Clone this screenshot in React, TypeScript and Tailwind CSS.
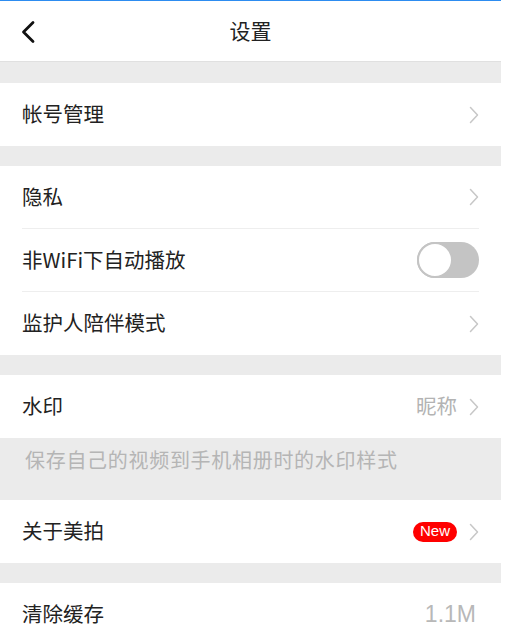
import React from "react";

const font = { fontFamily: '"Noto Sans CJK SC", "Noto Sans", sans-serif' };

const Chevron = () => (
  <svg width="10" height="18" viewBox="0 0 10 18" fill="none">
    <path d="M1.5 1.5 L8.5 9 L1.5 16.5" stroke="#c7c7c7" strokeWidth="1.5" strokeLinecap="round" strokeLinejoin="round" />
  </svg>
);

const Gap = ({ h = "h-[20px]" }: { h?: string }) => <div className={`${h} bg-[#ebebeb]`} />;

const Row = ({
  label,
  right,
  divider = false,
}: {
  label: string;
  right?: React.ReactNode;
  divider?: boolean;
}) => (
  <div className="bg-white px-[22px]">
    <div className={`flex h-[63px] items-center justify-between ${divider ? "border-b border-[#eeeeee]" : ""}`}>
      <span className="pb-[2px] text-[20.5px] leading-none text-[#222222]">{label}</span>
      <div className="flex items-center gap-[12px]">{right}</div>
    </div>
  </div>
);

export default function App() {
  return (
    <div className="min-h-[643px] w-[510px] bg-white" style={font}>
      <div className="w-[501px]">
        <div className="h-px bg-[#2d8cf0]" />
        <header className="relative flex h-[60px] items-center justify-center bg-white">
          <svg className="absolute left-[20px] top-[19px]" width="16" height="24" viewBox="0 0 16 24" fill="none">
            <path d="M13 2.5 L3.5 12 L13 21.5" stroke="#111111" strokeWidth="2.8" strokeLinecap="round" strokeLinejoin="round" />
          </svg>
          <h1 className="pb-[2px] text-[21px] leading-none text-[#222222]">设置</h1>
        </header>
        <div className="h-[22px] border-t border-[#e0e0e0] bg-[#ebebeb]" />
        <Row label="帐号管理" right={<Chevron />} />
        <Gap />
        <Row label="隐私" right={<Chevron />} divider />
        <Row
          label="非WiFi下自动播放"
          divider
          right={
            <div className="flex h-[36px] w-[62px] items-center rounded-full bg-[#c4c4c4]">
              <div className="h-[36px] w-[36px] rounded-full border-2 border-[#c4c4c4] bg-white" />
            </div>
          }
        />
        <Row label="监护人陪伴模式" right={<Chevron />} />
        <Gap />
        <Row
          label="水印"
          right={
            <>
              <span className="pb-[2px] text-[20.5px] leading-none text-[#b3b3b3]">昵称</span>
              <Chevron />
            </>
          }
        />
        <div className="h-[62px] bg-[#ebebeb] px-[25px] pt-[12px]">
          <p className="text-[20px] leading-none tracking-[0.7px] text-[#b5b5b5]">保存自己的视频到手机相册时的水印样式</p>
        </div>
        <Row
          label="关于美拍"
          right={
            <>
              <span
                className="flex h-[20px] items-center rounded-full bg-[#ff0000] px-[7px] text-[15px] text-white"
                style={{ fontFamily: '"Liberation Sans", Arial, sans-serif' }}
              >
                New
              </span>
              <Chevron />
            </>
          }
        />
        <Gap />
        <Row
          label="清除缓存"
          right={
            <span
              className="pr-[3px] text-[23px] font-light text-[#b8b8b8]"
              style={{ fontFamily: '"Liberation Sans", Arial, sans-serif' }}
            >
              1.1M
            </span>
          }
        />
      </div>
    </div>
  );
}
